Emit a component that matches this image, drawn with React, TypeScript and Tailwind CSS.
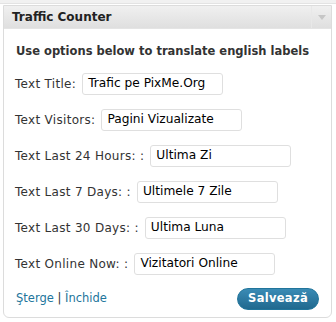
import React from "react";

const rows: { label: string; value: string; w: string }[] = [
  { label: "Text Title:", value: "Trafic pe PixMe.Org", w: "Title" },
  { label: "Text Visitors:", value: "Pagini Vizualizate", w: "Visitors" },
  { label: "Text Last 24 Hours: :", value: "Ultima Zi", w: "24" },
  { label: "Text Last 7 Days: :", value: "Ultimele 7 Zile", w: "7" },
  { label: "Text Last 30 Days: :", value: "Ultima Luna", w: "30" },
  { label: "Text Online Now: :", value: "Vizitatori Online", w: "online" },
];

export default function App() {
  return (
    <div className="w-[336px] h-[322px] bg-white overflow-hidden relative" style={{ fontFamily: '"DejaVu Sans", Verdana, sans-serif' }}>
      <div className="h-[4px] bg-[#f1f1f1] border-b border-[#e3e3e3]" />
      <div className="ml-[3px] mt-[1px] w-[329px] h-[313px] border border-[#dcdcdc] rounded-b-[6px] flex flex-col">
        <div className="h-[23px] flex items-center bg-gradient-to-b from-[#f0f0f0] to-[#dfdfdf] border-b border-[#e4e4e4]">
          <div className="flex-1 pl-[8px] text-[12px] font-bold text-[#222]">Traffic Counter</div>
          <div className="w-[20px] h-full border-l border-[#e8e8e8] flex items-center justify-center">
            <div className="w-0 h-0 border-l-[4px] border-r-[4px] border-t-[5px] border-l-transparent border-r-transparent border-t-[#c6c6c6]" />
          </div>
        </div>
        <div className="pl-[11px] pr-[12px] pt-[13px] flex flex-col">
          <div className="pl-[1px] text-[11.5px] font-bold text-[#333] h-[20px] flex items-center">Use options below to translate english labels</div>
          <div className="flex flex-col gap-[13px] mt-[10px]">
            {rows.map((r) => (
              <div key={r.w} className="flex items-center h-[23px]">
                <span className="text-[12px] tracking-[0.3px] text-[#333] mr-[6px]">{r.label}</span>
                <div className="w-[141px] h-[22px] border border-[#dfdfdf] rounded-[3px] flex items-center pl-[5px] text-[12.2px] text-black">
                  {r.value}
                </div>
              </div>
            ))}
          </div>
          <div className="flex items-center justify-between mt-[13px]">
            <div className="pl-[1px] text-[11.5px] text-[#21759b]">
              <span>Şterge</span>
              <span className="text-[#333]"> | </span>
              <span>Închide</span>
            </div>
            <div className="mr-[0px] w-[82px] h-[22px] rounded-full bg-gradient-to-b from-[#3a8bb5] to-[#20698f] border border-[#21759b] flex items-center justify-center text-white text-[11.5px] tracking-[0.3px] font-bold">
              Salvează
            </div>
          </div>
        </div>
      </div>
    </div>
  );
}
